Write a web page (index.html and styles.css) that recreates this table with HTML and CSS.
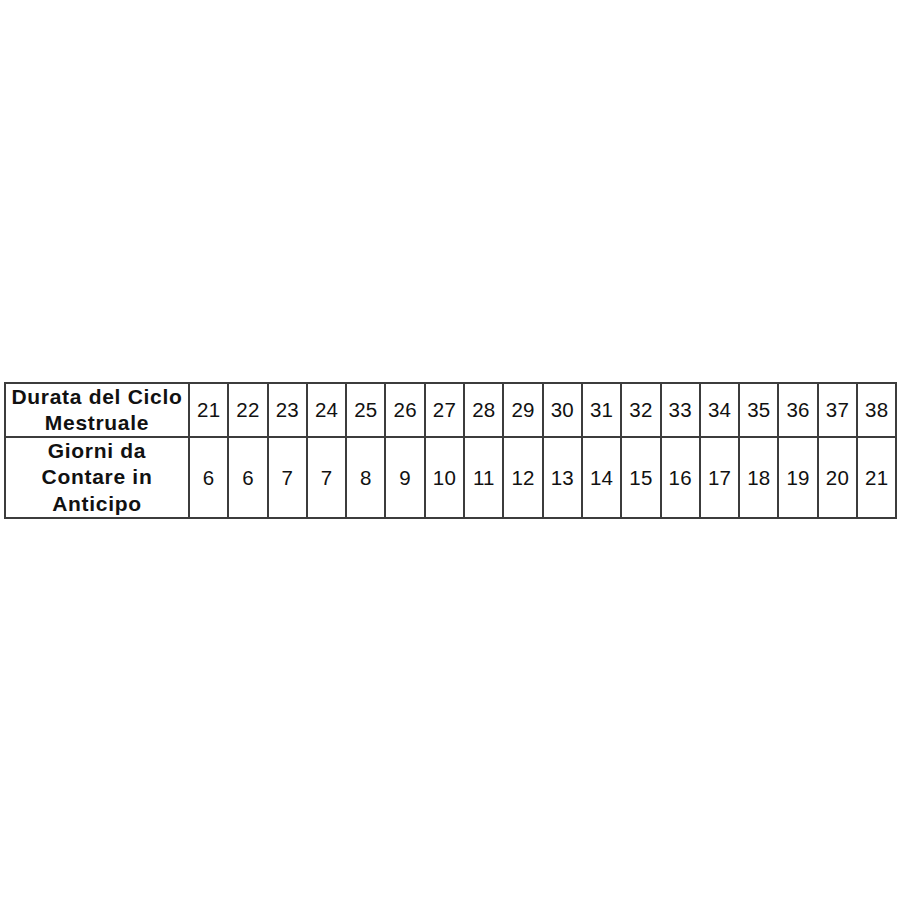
FILE: index.html
```html
<!DOCTYPE html>
<html lang="it">
<head>
<meta charset="utf-8">
<title>Tabella ciclo</title>
<link rel="stylesheet" href="styles.css">
</head>
<body>
<main class="page">
  <table class="cycle">
    <colgroup>
      <col class="c-label">
      <col span="18" class="c-num">
    </colgroup>
    <tbody>
      <tr class="row1">
        <th>Durata del Ciclo<br>Mestruale</th>
        <td>21</td><td>22</td><td>23</td><td>24</td><td>25</td><td>26</td><td>27</td><td>28</td><td>29</td><td>30</td><td>31</td><td>32</td><td>33</td><td>34</td><td>35</td><td>36</td><td>37</td><td>38</td>
      </tr>
      <tr class="row2">
        <th>Giorni da<br>Contare in<br>Anticipo</th>
        <td>6</td><td>6</td><td>7</td><td>7</td><td>8</td><td>9</td><td>10</td><td>11</td><td>12</td><td>13</td><td>14</td><td>15</td><td>16</td><td>17</td><td>18</td><td>19</td><td>20</td><td>21</td>
      </tr>
    </tbody>
  </table>
</main>
</body>
</html>
```
FILE: styles.css
```css
html, body {
  margin: 0;
  padding: 0;
  background: #ffffff;
}
.page {
  padding: 382px 4px 0 4px;
}
.cycle {
  border-collapse: collapse;
  table-layout: fixed;
  width: 892px;
  font-family: "Liberation Sans", Arial, sans-serif;
  line-height: 26px;
  color: #111111;
}
.c-label { width: 184px; }
.c-num { width: 39.3px; }
.cycle th,
.cycle td {
  border: 2px solid #3c3c3c;
  padding: 0;
  text-align: center;
  vertical-align: middle;
  white-space: nowrap;
}
.cycle th {
  font-weight: bold;
  font-size: 21px;
  letter-spacing: 0.7px;
}
.cycle td {
  font-weight: normal;
  font-size: 20.5px;
  letter-spacing: 0.2px;
}
.row1 th, .row1 td { height: 51px; }
.row2 th, .row2 td { height: 78px; }
.row2 th { line-height: 26.4px; }
```
